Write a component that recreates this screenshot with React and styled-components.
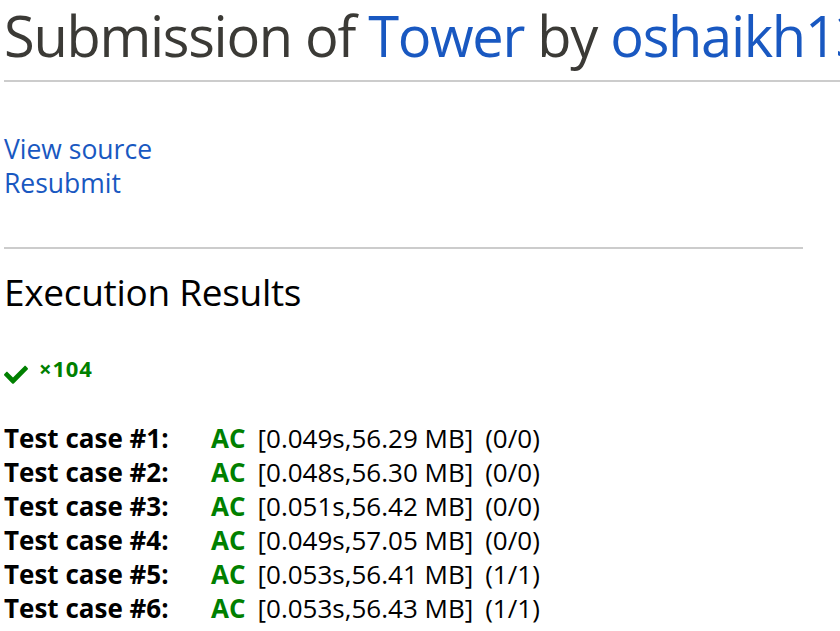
import React from "react";
import styled, { createGlobalStyle } from "styled-components";

const Global = createGlobalStyle`
  html, body { margin: 0; padding: 0; background: #fff; overflow: hidden; }
  body { font-family: "Open Sans", "Noto Sans", sans-serif; color: #000; }
`;

const Page = styled.div`
  padding: 0 0 0 4px;
  width: 799px;
`;

const TitleRow = styled.div`
  width: 1000px;
  border-bottom: 2px solid #ccc;
  padding-bottom: 10px;
`;

const Title = styled.h2`
  margin: 0;
  font-weight: 400;
  font-size: 56px;
  line-height: 70px;
  color: #3b3a36;
  white-space: nowrap;
  letter-spacing: -1.3px;
`;

const Link = styled.a`
  color: #1958c1;
  text-decoration: none;
`;

const Links = styled.div`
  margin-top: 50px;
  display: flex;
  flex-direction: column;
  font-size: 26.5px;
  line-height: 34px;
  padding-bottom: 47px;
  border-bottom: 2px solid #ccc;
`;

const Section = styled.h3`
  margin: 21px 0 0;
  font-weight: 400;
  font-size: 37px;
  line-height: 44px;
  color: #000;
  letter-spacing: -0.3px;
`;

const Summary = styled.div`
  display: flex;
  align-items: flex-start;
  gap: 11px;
  margin-top: 51px;
  color: #008000;
`;

const Count = styled.span`
  font-weight: 700;
  font-size: 22px;
  line-height: 24px;
  margin-top: -9px;
  letter-spacing: 0.8px;
`;

const Table = styled.div`
  margin-top: 37px;
  display: grid;
  grid-template-columns: 207px auto;
  font-size: 26px;
  line-height: 34px;
`;

const Label = styled.div`
  font-weight: 700;
`;

const Result = styled.div`
  display: flex;
  gap: 12px;
  white-space: nowrap;
`;

const Status = styled.span`
  color: #008000;
  font-weight: 700;
`;

const CheckIcon = () => (
  <svg width="24" height="19" viewBox="0 0 512 400" fill="#008000">
    <path d="M173.9 389.4L7.5 223c-10-10-10-26.2 0-36.2l36.2-36.2c10-10 26.2-10 36.2 0L192 262.7 432.1 22.6c10-10 26.2-10 36.2 0l36.2 36.2c10 10 10 26.2 0 36.2L210.1 389.4c-10 10-26.2 10-36.2 0z" />
  </svg>
);

const cases = [
  ["0.049s", "56.29 MB", "(0/0)"],
  ["0.048s", "56.30 MB", "(0/0)"],
  ["0.051s", "56.42 MB", "(0/0)"],
  ["0.049s", "57.05 MB", "(0/0)"],
  ["0.053s", "56.41 MB", "(1/1)"],
  ["0.053s", "56.43 MB", "(1/1)"],
];

export default function App() {
  return (
    <>
      <Global />
      <Page>
        <TitleRow>
          <Title>
            Submission of <Link href="#">Tower</Link> by <Link href="#">oshaikh13</Link>
          </Title>
        </TitleRow>
        <Links>
          <Link href="#">View source</Link>
          <Link href="#">Resubmit</Link>
        </Links>
        <Section>Execution Results</Section>
        <Summary>
          <CheckIcon />
          <Count>×104</Count>
        </Summary>
        <Table>
          {cases.map((c, i) => (
            <React.Fragment key={i}>
              <Label>Test case #{i + 1}:</Label>
              <Result>
                <Status>AC</Status>
                <span>[{c[0]},{c[1]}]</span>
                <span>{c[2]}</span>
              </Result>
            </React.Fragment>
          ))}
        </Table>
      </Page>
    </>
  );
}
